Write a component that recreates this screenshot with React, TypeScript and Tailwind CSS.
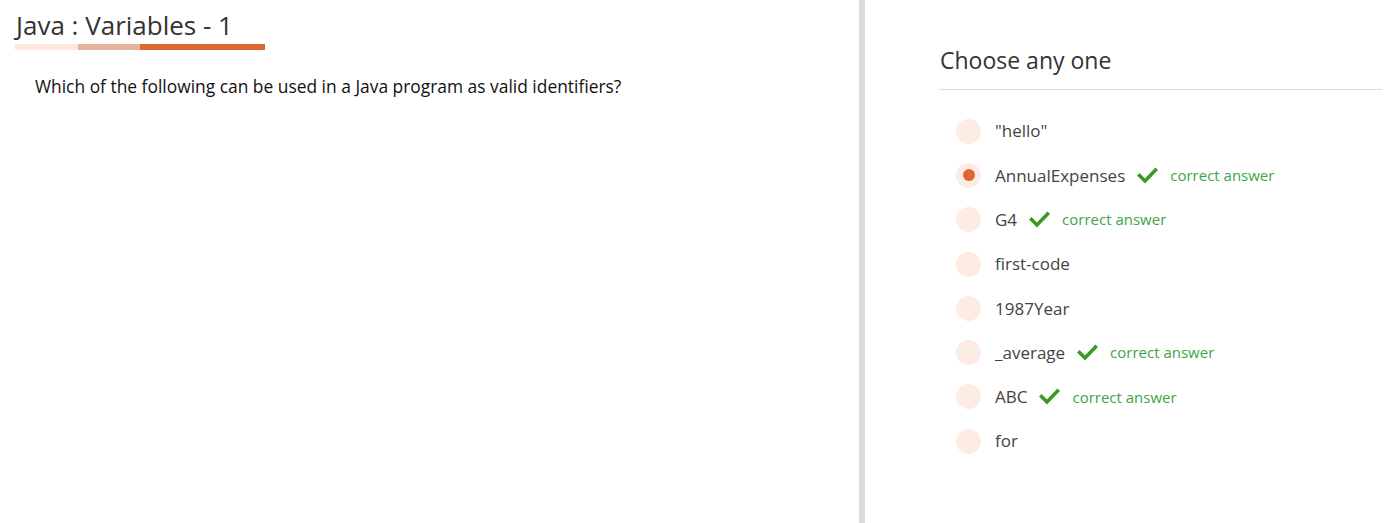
import React from "react";

const options = [
  { label: '"hello"', correct: false, selected: false },
  { label: "AnnualExpenses", correct: true, selected: true },
  { label: "G4", correct: true, selected: false },
  { label: "first-code", correct: false, selected: false },
  { label: "1987Year", correct: false, selected: false },
  { label: "_average", correct: true, selected: false },
  { label: "ABC", correct: true, selected: false },
  { label: "for", correct: false, selected: false },
];

function Check() {
  return (
    <svg width="21" height="17" viewBox="0 0 21 17" className="shrink-0">
      <path d="M2.5 8.5 L8 14 L18.5 3" fill="none" stroke="#3a9a1f" strokeWidth="3.6" strokeLinecap="square" />
    </svg>
  );
}

export default function App() {
  return (
    <div className="flex w-[1397px] h-[523px] bg-white text-[#333] font-['Open_Sans',sans-serif] overflow-hidden">
      <div className="w-[859px] shrink-0 pl-[15px] pt-[9px]">
        <h1 className="text-[26px] leading-[33px] text-[#333] pl-[1px]">Java : Variables - 1</h1>
        <div className="flex w-[250px] h-[6px] mt-[2px]">
          <div className="w-[63px] bg-[#fde8df]" />
          <div className="w-[62px] bg-[#e5b49a]" />
          <div className="flex-1 bg-[#e0662f]" />
        </div>
        <p className="mt-[24px] ml-[20px] text-[17.4px] leading-[24px] text-[#111]">
          Which of the following can be used in a Java program as valid identifiers?
        </p>
      </div>
      <div className="w-[6px] shrink-0 bg-[#dcdcdc]" />
      <div className="flex-1 pl-[74px] pr-[15px] pt-[44px]">
        <h2 className="text-[23px] leading-[32px] text-[#333] pl-[1px]">Choose any one</h2>
        <div className="h-px bg-[#dedede] mt-[13px]" />
        <div className="flex flex-col pt-[19px] pl-[17px]">
          {options.map((o) => (
            <div key={o.label} className="flex items-center h-[44.3px]">
              <div className="w-[25px] h-[25px] rounded-full bg-[#fdece4] flex items-center justify-center shrink-0">
                {o.selected && <div className="w-[12px] h-[12px] rounded-full bg-[#e0662f]" />}
              </div>
              <span className="ml-[14px] text-[17px] text-[#444]">{o.label}</span>
              {o.correct && (
                <span className="flex items-center ml-[12px] gap-[12px]">
                  <Check />
                  <span className="text-[15px] text-[#3aa645]">correct answer</span>
                </span>
              )}
            </div>
          ))}
        </div>
      </div>
    </div>
  );
}
